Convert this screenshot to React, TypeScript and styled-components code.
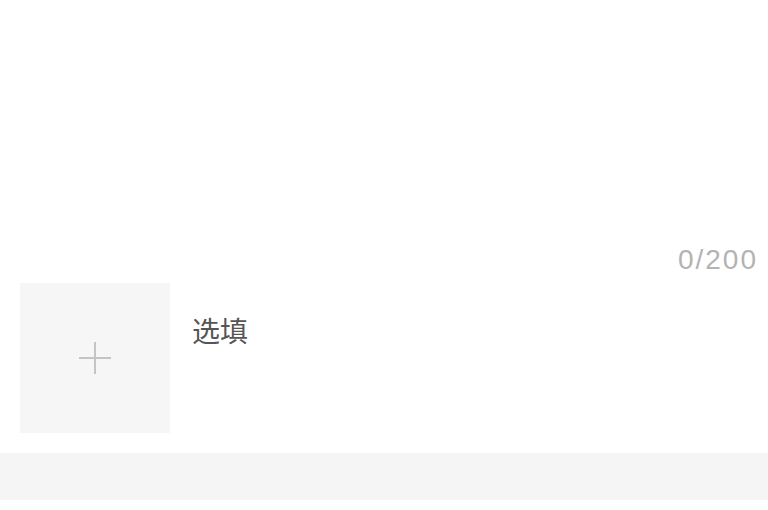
import React, { useState } from 'react';
import styled, { createGlobalStyle } from 'styled-components';

const GlobalStyle = createGlobalStyle`
  html, body {
    margin: 0;
    padding: 0;
    background: #fff;
  }
  body {
    font-family: 'Noto Sans', 'Noto Sans CJK SC', sans-serif;
  }
`;

const Page = styled.div`
  display: flex;
  flex-direction: column;
  width: 768px;
  height: 510px;
  overflow: hidden;
  background: #fff;
`;

const Editor = styled.div`
  display: flex;
  flex-direction: column;
  padding: 0 10px 0 20px;
`;

const TextArea = styled.textarea`
  display: block;
  width: 100%;
  height: 240px;
  box-sizing: border-box;
  border: none;
  outline: none;
  resize: none;
  padding: 20px 0;
  font-family: inherit;
  font-size: 28px;
  color: #333;
  background: transparent;
`;

const Counter = styled.div`
  height: 40px;
  line-height: 40px;
  text-align: right;
  font-family: 'Liberation Sans', sans-serif;
  font-size: 28px;
  letter-spacing: 2px;
  color: #b3b3b3;
`;

const UploadRow = styled.div`
  display: flex;
  align-items: flex-start;
  gap: 22px;
  margin-top: 3px;
`;

const UploadBox = styled.button`
  display: flex;
  align-items: center;
  justify-content: center;
  width: 150px;
  height: 150px;
  padding: 0;
  border: none;
  background: #f6f6f6;
  cursor: pointer;
`;

const Hint = styled.span`
  margin-top: 27px;
  font-family: 'Noto Sans CJK SC', sans-serif;
  font-size: 28px;
  line-height: 40px;
  color: #555;
`;

const Divider = styled.div`
  height: 47px;
  margin-top: 20px;
  background: #f5f5f5;
`;

const App = () => {
  const [text, setText] = useState('');

  return (
    <Page>
      <GlobalStyle />
      <Editor>
        <TextArea
          value={text}
          maxLength={200}
          onChange={(e) => setText(e.target.value)}
        />
        <Counter>{text.length}/200</Counter>
        <UploadRow>
          <UploadBox aria-label="add picture">
            <svg width="34" height="34" viewBox="0 0 34 34">
              <path d="M17 1v32M1 17h32" stroke="#c4c4c4" strokeWidth="2" fill="none" />
            </svg>
          </UploadBox>
          <Hint>选填</Hint>
        </UploadRow>
      </Editor>
      <Divider />
    </Page>
  );
};

export default App;
